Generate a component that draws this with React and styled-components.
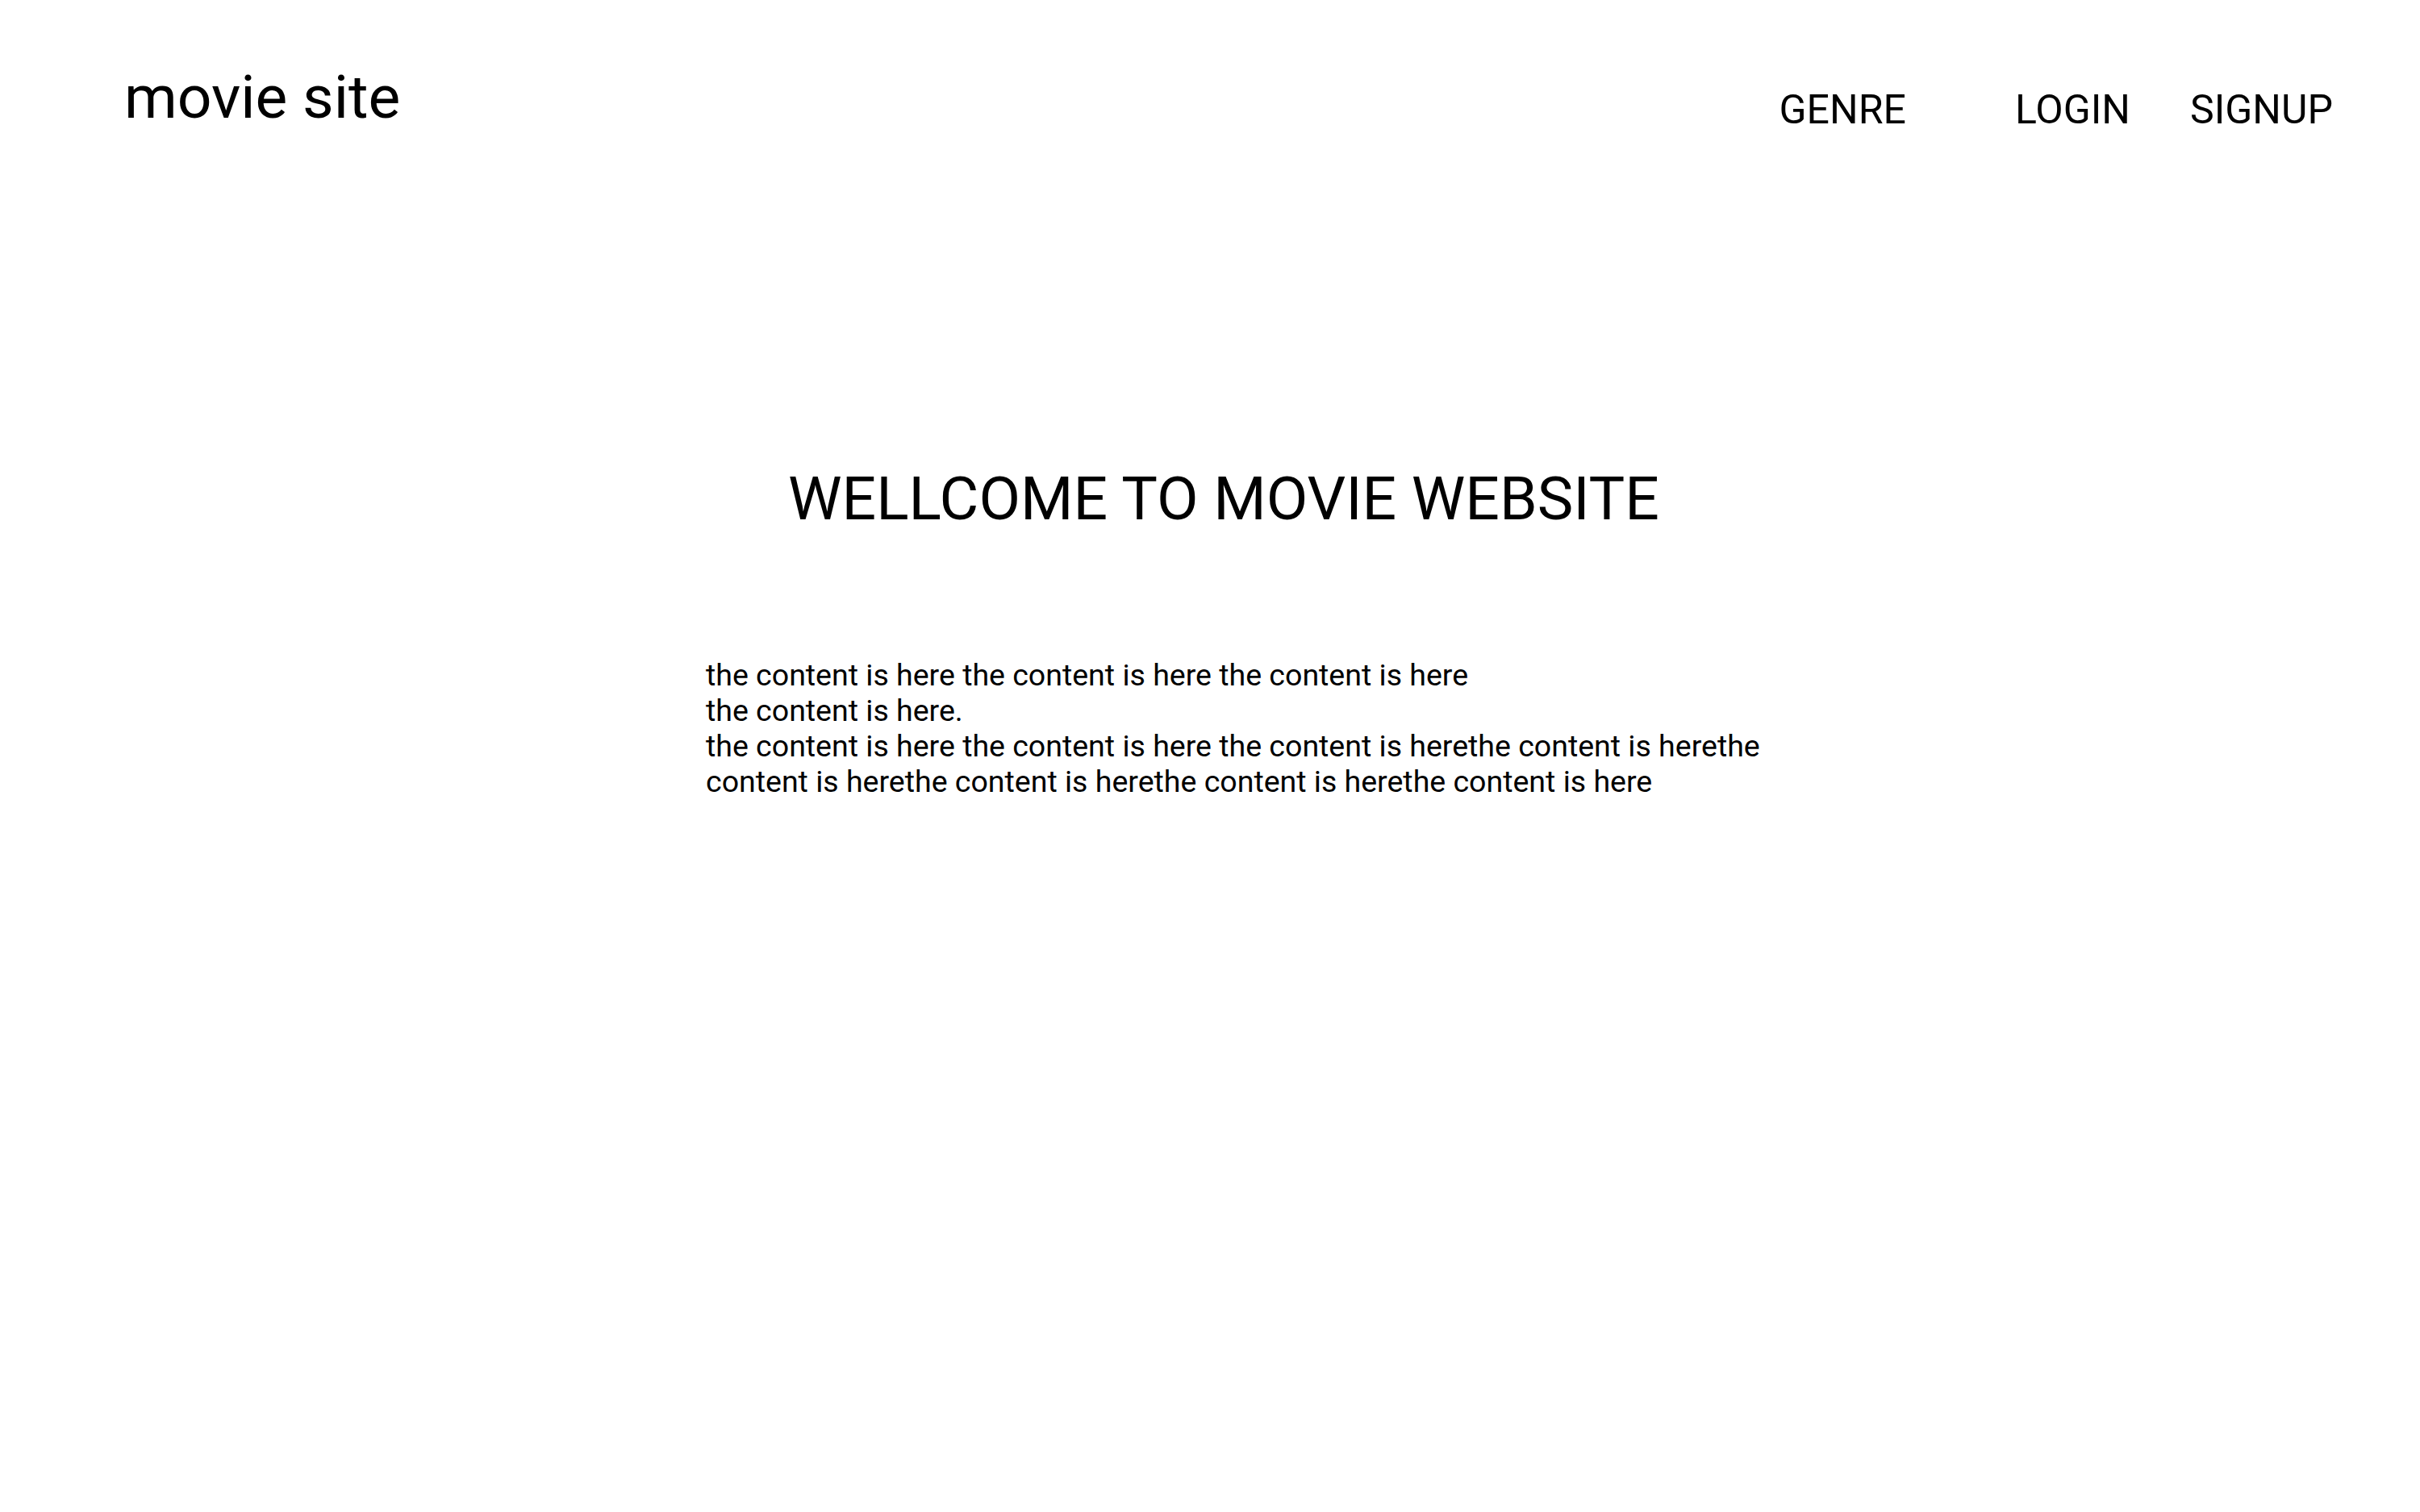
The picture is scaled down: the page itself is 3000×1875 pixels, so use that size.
import React from "react";
import styled, { createGlobalStyle } from "styled-components";

const GlobalStyle = createGlobalStyle`
  html, body { margin: 0; padding: 0; background: #fff; }
  body { font-family: Roboto, "Noto Sans", sans-serif; color: #000; }
`;

const Page = styled.div`
  min-height: 1875px;
  display: flex;
  flex-direction: column;
`;

const Header = styled.header`
  display: flex;
  align-items: flex-start;
  justify-content: space-between;
  padding: 83px 108px 0 154px;
`;

const Logo = styled.div`
  font-size: 75px;
  line-height: 1;
  font-weight: 400;
`;

const Nav = styled.nav`
  display: flex;
  align-items: center;
  padding-top: 28px;
`;

const NavItem = styled.a`
  font-size: 50px;
  line-height: 1;
  color: #000;
  text-decoration: none;
  margin-left: ${(p) => p.$gap}px;
`;

const Main = styled.main`
  display: flex;
  flex-direction: column;
  align-items: center;
  padding-top: 420px;
`;

const Title = styled.h1`
  margin: 0;
  font-size: 75px;
  font-weight: 400;
  line-height: 1;
  padding-left: 34px;
`;

const Content = styled.p`
  margin: 159px 0 0 0;
  align-self: flex-start;
  margin-left: 875px;
  width: 1320px;
  font-size: 37.5px;
  line-height: 44px;
`;

export default function App() {
  return (
    <>
      <GlobalStyle />
      <Page>
        <Header>
          <Logo>movie site</Logo>
          <Nav>
            <NavItem href="#" $gap={0}>GENRE</NavItem>
            <NavItem href="#" $gap={135}>LOGIN</NavItem>
            <NavItem href="#" $gap={74}>SIGNUP</NavItem>
          </Nav>
        </Header>
        <Main>
          <Title>WELLCOME TO MOVIE WEBSITE</Title>
          <Content>
            the content is here the content is here the content is here
            <br />
            the content is here.
            <br />
            the content is here the content is here the content is herethe content is herethe content is herethe content is herethe content is herethe content is here
          </Content>
        </Main>
      </Page>
    </>
  );
}
